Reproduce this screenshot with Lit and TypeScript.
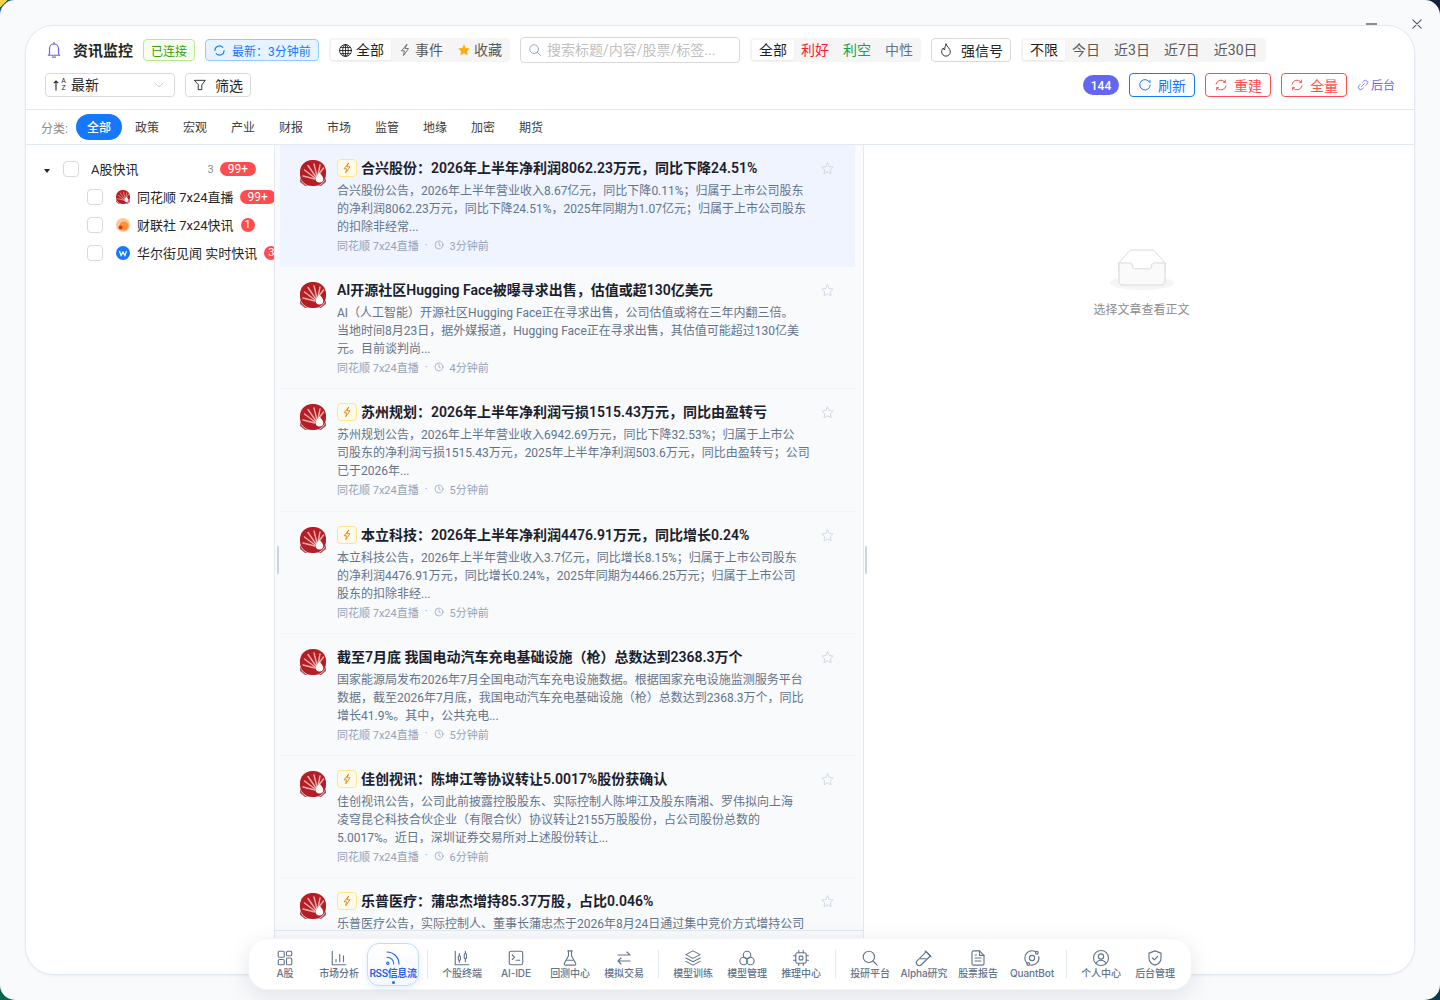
import { LitElement, html, css, svg } from "lit";
import { customElement } from "lit/decorators.js";

const ic = (body: any, size = 16, sw = 1.6) => html`<svg class="ic" width=${size} height=${size} viewBox="0 0 24 24" fill="none" stroke="currentColor" stroke-width=${sw} stroke-linecap="round" stroke-linejoin="round">${body}</svg>`;

const I: Record<string, any> = {
  bell: svg`<path d="M6 17V10a6 6 0 0 1 12 0v7l1.600 2H4.400z"/><path d="M10 21.500h4"/><path d="M12 2v2"/>`,
  spin: svg`<path d="M20.500 12a8.500 8.500 0 0 1-14.600 5.900"/><path d="M3.500 12A8.500 8.500 0 0 1 18.100 6.100"/>`,
  globe: svg`<circle cx="12" cy="12" r="9.500"/><ellipse cx="12" cy="12" rx="4.500" ry="9.500"/><path d="M2.500 12h19M4 7h16M4 17h16M12 2.500v19"/>`,
  bolt: svg`<path d="M15 2.500 6 13.500h5l-1.500 8 8.500-12h-5.500z"/>`,
  search: svg`<circle cx="10.500" cy="10.500" r="7.500"/><path d="m16 16 5.500 5.500"/>`,
  flame: svg`<path d="M12 2c1 4.500 7.500 7 7.500 13a7.500 7.500 0 0 1-15 0c0-3 1.500-5 3-6.500.3 1.800 1 3 2 3.500C10 8.500 10.500 5 12 2z"/>`,
  filter: svg`<path d="M3 4h18l-6 8v8H9v-8z"/>`,
  chev: svg`<path d="m4 8 8 8 8-8"/>`,
  refresh: svg`<path d="M20 7.500A9 9 0 1 0 21 12"/><path d="M20.500 4v3.500"/>`,
  rebuild: svg`<path d="M3.500 10.500A8.800 8.800 0 0 1 19 7"/><path d="M20.500 13.500A8.800 8.800 0 0 1 5 17"/><path d="M19.500 3.500V7.500h-3M4.500 20.500V16.500h3"/>`,
  link: svg`<path d="M9 15 15 9"/><path d="m11 6.500 2.500-2.500a4.500 4.500 0 0 1 6.500 6.500L17.500 13"/><path d="M13 17.500 10.500 20A4.500 4.500 0 0 1 4 13.500L6.500 11"/>`,
  star: svg`<path d="m12 3 2.800 5.800 6.200.9-4.500 4.400 1.100 6.300L12 17.400l-5.600 3 1.100-6.300L3 9.700l6.200-.9z"/>`,
  clock: svg`<circle cx="12" cy="12" r="9.500"/><path d="M12 6.500V12l3.500 2"/>`,
  close: svg`<path d="M5 5l14 14M19 5 5 19"/>`,
  grid: svg`<rect x="3" y="3" width="8" height="8" rx="1.500"/><rect x="14" y="3" width="7" height="6" rx="1.500"/><rect x="3" y="14" width="8" height="7" rx="1.500"/><rect x="14" y="12" width="7" height="9" rx="1.500"/>`,
  chart: svg`<path d="M3 3v18h18"/><path d="M8 17v-3M13 17V7M18 17v-8"/>`,
  rss: svg`<path d="M4 11a9 9 0 0 1 9 9"/><path d="M4 4a16 16 0 0 1 16 16"/><circle cx="5" cy="19" r="1.500"/>`,
  candle: svg`<path d="M3 3v18h18"/><rect x="7" y="9" width="3" height="6" rx="1.500"/><rect x="15" y="6" width="3" height="7" rx="1.500"/><path d="M8.500 6v3M8.500 15v3M16.500 3v3M16.500 13v4"/>`,
  term: svg`<rect x="3" y="3" width="18" height="18" rx="2.500"/><path d="m7 8 3 3-3 3M12 15h5"/>`,
  flask: svg`<path d="M9 2.500h6M10 2.500V9l-5.500 10a1.700 1.700 0 0 0 1.500 2.500h12a1.700 1.700 0 0 0 1.500-2.500L14 9V2.500"/><path d="M7.500 15h9"/>`,
  swap: svg`<path d="M4 8h16M16 4l4 4M20 16H4M8 12l-4 4 4 4"/>`,
  layers: svg`<path d="m12 2.500 9.500 5-9.500 5-9.500-5z"/><path d="m2.500 12 9.500 5 9.500-5"/><path d="m2.500 16.500 9.500 5 9.500-5"/>`,
  rings: svg`<circle cx="12" cy="8" r="5"/><circle cx="7.500" cy="16" r="5"/><circle cx="16.500" cy="16" r="5"/>`,
  chip: svg`<rect x="5" y="5" width="14" height="14" rx="2.500"/><rect x="9.500" y="9.500" width="5" height="5" rx="1"/><path d="M9 2v3M15 2v3M9 19v3M15 19v3M2 9h3M2 15h3M19 9h3M19 15h3"/>`,
  pen: svg`<path d="M15 3.500 20.500 9 8.500 21a3.800 3.800 0 0 1-5.500-5.500z"/><path d="M13.500 2.500l8 8M7 13h8"/>`,
  doc: svg`<path d="M14 2.500H6a2 2 0 0 0-2 2v15a2 2 0 0 0 2 2h12a2 2 0 0 0 2-2V8.500z"/><path d="M14 2.500v6h6M8 12h8M8 16h8M8 8h2"/>`,
  orbit: svg`<circle cx="12" cy="12" r="3.500"/><path d="M17 3.800A9.500 9.500 0 0 0 5 5.500 9.500 9.500 0 0 0 5.500 19"/><path d="M21 10a9.500 9.500 0 0 1-11 11.300"/><circle cx="18.500" cy="5" r="1.800"/><circle cx="7" cy="20" r="1.800"/>`,
  user: svg`<circle cx="12" cy="12" r="10"/><circle cx="12" cy="10" r="3.500"/><path d="M5.500 19.500c1-3 3.500-4.500 6.500-4.500s5.500 1.500 6.500 4.500"/>`,
  shield: svg`<path d="M12 2.500 20 5.500v6.500c0 4.500-3.500 8-8 9.500-4.500-1.500-8-5-8-9.500V5.500z"/><path d="m8.500 12 2.500 2.500 4.500-4.500"/>`,
};

const ths = (s: number) => html`<svg width=${s} height=${s} viewBox="0 0 26 26"><rect width="26" height="26" rx="12" fill="#b51e26"/><path d="M0 18a14 14 0 0 0 26 0v4l-5 4H5l-5-4z" fill="#7d1219" opacity=".7"/><g stroke="#eeb0aa" stroke-width="1.400" fill="none" stroke-linecap="round"><path d="M15 19 3 16"/><path d="M15 18 4.500 10"/><path d="M16 17 8 5.500"/><path d="M17 16 14 4"/><path d="M18 15l2-10"/><path d="M19 14 23.500 8"/></g><path d="M19.500 12.500c2.200 2.800 3.800 4.400 3.800 6.300a3.800 3.800 0 0 1-7.600 0c0-1.900 1.600-3.500 3.800-6.300z" fill="#fff"/></svg>`;

const ITEMS = [
  { tag: 1, title: "合兴股份：2026年上半年净利润8062.23万元，同比下降24.51%", body: "合兴股份公告，2026年上半年营业收入8.67亿元，同比下降0.11%；归属于上市公司股东\n的净利润8062.23万元，同比下降24.51%，2025年同期为1.07亿元；归属于上市公司股东\n的扣除非经常...", time: "3分钟前" },
  { tag: 0, title: "AI开源社区Hugging Face被曝寻求出售，估值或超130亿美元", body: "AI（人工智能）开源社区Hugging Face正在寻求出售，公司估值或将在三年内翻三倍。\n当地时间8月23日，据外媒报道，Hugging Face正在寻求出售，其估值可能超过130亿美\n元。目前谈判尚...", time: "4分钟前" },
  { tag: 1, title: "苏州规划：2026年上半年净利润亏损1515.43万元，同比由盈转亏", body: "苏州规划公告，2026年上半年营业收入6942.69万元，同比下降32.53%；归属于上市公\n司股东的净利润亏损1515.43万元，2025年上半年净利润503.6万元，同比由盈转亏；公司\n已于2026年...", time: "5分钟前" },
  { tag: 1, title: "本立科技：2026年上半年净利润4476.91万元，同比增长0.24%", body: "本立科技公告，2026年上半年营业收入3.7亿元，同比增长8.15%；归属于上市公司股东\n的净利润4476.91万元，同比增长0.24%，2025年同期为4466.25万元；归属于上市公司\n股东的扣除非经...", time: "5分钟前" },
  { tag: 0, title: "截至7月底 我国电动汽车充电基础设施（枪）总数达到2368.3万个", body: "国家能源局发布2026年7月全国电动汽车充电设施数据。根据国家充电设施监测服务平台\n数据，截至2026年7月底，我国电动汽车充电基础设施（枪）总数达到2368.3万个，同比\n增长41.9%。其中，公共充电...", time: "5分钟前" },
  { tag: 1, title: "佳创视讯：陈坤江等协议转让5.0017%股份获确认", body: "佳创视讯公告，公司此前披露控股股东、实际控制人陈坤江及股东隋湘、罗伟拟向上海\n凌穹昆仑科技合伙企业（有限合伙）协议转让2155万股股份，占公司股份总数的\n5.0017%。近日，深圳证券交易所对上述股份转让...", time: "6分钟前" },
  { tag: 1, title: "乐普医疗：蒲忠杰增持85.37万股，占比0.046%", body: "乐普医疗公告，实际控制人、董事长蒲忠杰于2026年8月24日通过集中竞价方式增持公司\n股份85.37万股，占公司总股本的0.046%，本次增持后合计持股...", time: "6分钟前" },
];

const DOCK: any[][] = [
  [["grid", "A股"], ["chart", "市场分析"], ["rss", "RSS信息流", 1]],
  [["candle", "个股终端"], ["term", "AI-IDE"], ["flask", "回测中心"], ["swap", "模拟交易"]],
  [["layers", "模型训练"], ["rings", "模型管理"], ["chip", "推理中心"]],
  [["search", "投研平台"], ["pen", "Alpha研究"], ["doc", "股票报告"], ["orbit", "QuantBot"]],
  [["user", "个人中心"], ["shield", "后台管理"]],
];

@customElement("app-root")
export class AppRoot extends LitElement {
  static styles = css`
    :host { display: block; width: 1440px; height: 1000px; position: relative; overflow: hidden;
      font-family: Roboto, "Noto Sans CJK SC", "Noto Sans", sans-serif; color: #262626;
      background:
        linear-gradient(135deg, #f2d24a 0 12%, #1b5f86 12% 50%, transparent 50%) 0 0 / 30px 30px no-repeat,
        linear-gradient(225deg, #13233f 0 50%, transparent 50%) 100% 0 / 30px 30px no-repeat,
        linear-gradient(45deg, #07634f 0 50%, transparent 50%) 0 100% / 30px 30px no-repeat,
        linear-gradient(315deg, #0d3a48 0 50%, transparent 50%) 100% 100% / 30px 30px no-repeat,
        #f8fafc; }
    * { box-sizing: border-box; }
    .ic { display: block; flex: none; }
    .up { margin-bottom: 2px; }
    .win { height: 1000px; padding: 25px; border-radius: 15px; background: #f8fafc; }
    .panel { height: 950px; border: 1px solid #e2e8f0; border-radius: 28px; background: #fff; overflow: hidden; display: flex; flex-direction: column; box-shadow: 0 1px 3px rgba(15,23,42,.05); }
    .hdr { height: 84px; flex: none; padding: 12px 19px 0; border-bottom: 1px solid #e2e8f0; display: flex; flex-direction: column; gap: 11px; }
    .row { display: flex; align-items: center; height: 24px; gap: 10px; }
    .bell { color: #6366f1; width: 18px; }
    .title { font-size: 15px; font-weight: 600; white-space: nowrap; color: #262626; }
    .badge { height: 22px; display: flex; align-items: center; gap: 6px; padding: 0 7px; border: 1px solid; border-radius: 4px; font-size: 12px; white-space: nowrap; }
    .ok { color: #389e0d; background: #f6ffed; border-color: #b7eb8f; }
    .new { color: #1677ff; background: #e6f4ff; border-color: #91caff; width: 114px; }
    .seg { display: flex; height: 24px; background: #f5f5f5; border-radius: 4px; padding: 2px; font-size: 14px; color: #595959; white-space: nowrap; }
    .seg span { display: flex; align-items: center; gap: 3px; padding: 0 7px; line-height: 20px; border-radius: 2px; }
    .seg span:last-child { padding-right: 6px; }
    .seg span.on { background: #fff; color: #1f1f1f; box-shadow: 0 1px 2px rgba(0,0,0,.05); }
    .pos { color: #f5222d; } .neg { color: #16a34a; } .neu { color: #64748b; }
    .search { width: 220px; height: 26px; border: 1px solid #d9d9d9; border-radius: 4px; display: flex; align-items: center; gap: 5px; padding: 0 7px; font-size: 14px; color: #bfbfbf; white-space: nowrap; }
    .search .ic { color: #8fa1bb; }
    .btn { height: 24px; display: flex; align-items: center; gap: 8px; border: 1px solid #d9d9d9; border-radius: 4px; padding: 0 7px; font-size: 14px; color: #262626; background: #fff; white-space: nowrap; }
    .sel { width: 130px; gap: 4px; justify-content: flex-start; }
    .sel .chev { margin-left: auto; margin-right: 2px; color: #bfbfbf; }
    .az { font-size: 7px; line-height: 7px; text-align: center; width: 7px; }
    .sortic { display: flex; align-items: center; gap: 1px; width: 14px; }
    .spacer { flex: 1; }
    .count { height: 20px; width: 36px; border-radius: 10px; background: #6366f1; color: #fff; font-size: 12px; font-weight: 500; display: flex; align-items: center; justify-content: center; padding-top: 2px; }
    .blue { color: #1677ff; border-color: #1677ff; }
    .red { color: #ff4d4f; border-color: #ff4d4f; }
    .btn.wide { padding: 0 8px; gap: 6px; }
    .link { display: flex; align-items: center; gap: 2px; font-size: 12px; color: #6366f1; white-space: nowrap; }
    .cats { height: 35px; flex: none; border-bottom: 1px solid #e2e8f0; display: flex; align-items: center; gap: 2px; padding-left: 15px; font-size: 12px; color: #404040; white-space: nowrap; }
    .cats .lab { color: #8c8c8c; margin-right: 6px; }
    .cats span.c { padding: 0 11px; height: 26px; line-height: 28px; border-radius: 13px; }
    .cats span.on { background: #1677ff; color: #fff; font-weight: 500; }
    .main { flex: 1; min-height: 0; display: flex; }
    .tree { width: 249px; flex: none; border-right: 1px solid #e2e8f0; padding-top: 10px; overflow: hidden; font-size: 13px; color: #262626; }
    .node { height: 28px; display: flex; align-items: center; white-space: nowrap; }
    .node.root { padding-left: 18px; }
    .node.kid { padding-left: 61px; }
    .caret { width: 0; height: 0; border: 3.500px solid transparent; border-top: 4px solid #262626; border-bottom: 0; margin-right: 13px; margin-top: 3px; }
    .cb { width: 16px; height: 16px; border: 1px solid #d9d9d9; border-radius: 4px; background: #fff; flex: none; }
    .root .cb { margin-right: 12px; }
    .kid .cb { margin-right: 13px; }
    .srcic { width: 14px; height: 14px; margin-right: 7px; flex: none; display: block; }
    .n { font-size: 11px; color: #8c8c8c; margin-left: auto; margin-right: 6px; }
    .root { padding-right: 18px; }
    .pill { background: #ff4d4f; color: #fff; font-size: 12px; line-height: 14px; height: 14px; border-radius: 7px; padding: 0 8px; margin-left: 6px; flex: none; }
    .root .pill { margin-left: 0; }
    .pill.one { padding: 0; width: 14px; text-align: center; font-size: 11px; margin-left: 7px; }
    .list { width: 589px; flex: none; background: #f8fafc; border-right: 1px solid #e2e8f0; overflow: hidden; display: flex; flex-direction: column; }
    .scroll { height: 786px; flex: none; overflow: hidden; padding-left: 5px; padding-right: 8px; border-bottom: 1px solid #e2e8f0; }
    .item { height: 122.200px; padding: 11px 20px 0; display: flex; gap: 11px; border-bottom: 1px solid #f1f5f9; position: relative; }
    .item.on { background: #eff4ff; border-bottom-color: transparent; }
    .ava { flex: none; margin-top: 4px; }
    .bodyc { width: 482px; }
    .tline { display: flex; align-items: center; gap: 4px; height: 22px; font-size: 14px; font-weight: 600; color: #1a202c; white-space: nowrap; }
    .tag { width: 20px; height: 18px; margin-top: 2px; border: 1px solid #fde68a; background: #fffbeb; border-radius: 4px; display: flex; align-items: center; justify-content: center; color: #d97706; flex: none; }
    .txt { margin: 4px 0 0; font-size: 12px; line-height: 18px; height: 54px; color: #64748b; overflow: hidden; white-space: pre; }
    .meta { display: flex; align-items: center; gap: 6px; height: 18px; font-size: 11px; color: #94a3b8; white-space: nowrap; }
    .starb { position: absolute; left: 540px; top: 16px; color: #cbd5e1; }
    .grip { position: absolute; top: 546px; width: 2px; height: 28px; background: #cbd5e1; border-radius: 1px; }
    .detail { flex: 1; display: flex; flex-direction: column; align-items: center; padding: 104px 0 0 5px; font-size: 12px; color: #8c8c8c; }
    .detail p { margin: 11px 0 0; line-height: 18px; }
    .ctl-min { position: absolute; left: 1366px; top: 23px; width: 11px; height: 2px; background: #8c8c8c; }
    .ctl-x { position: absolute; left: 1410px; top: 17px; color: #4b5563; }
    .dock { position: absolute; left: 248px; top: 938px; width: 944px; height: 52px; border-radius: 20px; background: rgba(255,255,255,.97); box-shadow: 0 6px 24px rgba(15,23,42,.1); border: 1px solid #f1f5f9; display: flex; align-items: center; padding: 0 10px; gap: 2px; }
    .di { width: 52px; height: 43px; flex: none; display: flex; flex-direction: column; align-items: center; padding-top: 5px; color: #64748b; border-radius: 12px; border: 1px solid transparent; position: relative; }
    .di span { font-size: 10px; line-height: 13px; font-weight: 500; white-space: nowrap; font-family: Inter, "Noto Sans CJK SC", sans-serif; letter-spacing: -.1px; }
    .di.on { color: #2563eb; border-color: #bfdbfe; background: linear-gradient(#fff, #f5f8ff); box-shadow: 0 2px 6px rgba(37,99,235,.12); }
    .di.on span { font-weight: 600; letter-spacing: -.4px; }
    .di.on i { position: absolute; left: 23.500px; bottom: 1px; width: 3px; height: 3px; border-radius: 50%; background: #2563eb; }
    .dsep { width: 1px; height: 28px; margin: 0 6px; background: #e2e8f0; flex: none; }
  `;

  seg(items: any[]) {
    return html`<div class="seg">${items.map((i) => html`<span class="${i.on ? "on" : ""} ${i.c || ""}">${i.ic || ""}${i.t}</span>`)}</div>`;
  }

  render() {
    return html`
      <div class="win"><div class="panel">
        <div class="hdr">
          <div class="row">
            <span class="bell">${ic(I.bell, 18, 1.6)}</span>
            <span class="title up">资讯监控</span>
            <span class="badge ok">已连接</span>
            <span class="badge new">${ic(I.spin, 13, 2)}最新：3分钟前</span>
            ${this.seg([
              { t: "全部", on: 1, ic: ic(I.globe, 15, 1.4) },
              { t: "事件", ic: ic(I.bolt, 14, 1.4) },
              { t: "收藏", ic: html`<svg class="ic" width="14" height="14" viewBox="0 0 24 24" fill="#faad14"><path d="m12 2 3 6.500 7 .9-5 4.800 1.300 7L12 17.800l-6.300 3.400 1.300-7-5-4.800 7-.9z"/></svg>` },
            ])}
            <div class="search">${ic(I.search, 14, 1.6)}<span class="up">搜索标题/内容/股票/标签...</span></div>
            ${this.seg([{ t: "全部", on: 1 }, { t: "利好", c: "pos" }, { t: "利空", c: "neg" }, { t: "中性", c: "neu" }])}
            <div class="btn">${ic(I.flame, 14, 1.6)}<span>强信号</span></div>
            ${this.seg([{ t: "不限", on: 1 }, { t: "今日" }, { t: "近3日" }, { t: "近7日" }, { t: "近30日" }])}
          </div>
          <div class="row">
            <div class="btn sel">
              <span class="sortic"><svg class="ic" width="6" height="11" viewBox="0 0 6 11" fill="none" stroke="currentColor" stroke-width="1.100"><path d="M3 10.500V1M.8 3.200 3 1l2.200 2.200"/></svg><span class="az">A<br />Z</span></span>
              <span class="up">最新</span>
              <span class="chev">${ic(I.chev, 12, 1.4)}</span>
            </div>
            <div class="btn">${ic(I.filter, 14, 1.6)}<span>筛选</span></div>
            <span class="spacer"></span>
            <span class="count">144</span>
            <div class="btn wide blue">${ic(I.refresh, 14, 1.7)}<span>刷新</span></div>
            <div class="btn wide red">${ic(I.rebuild, 14, 1.7)}<span>重建</span></div>
            <div class="btn wide red">${ic(I.rebuild, 14, 1.7)}<span>全量</span></div>
            <span class="link">${ic(I.link, 12, 1.6)}<span class="up">后台</span></span>
          </div>
        </div>
        <div class="cats">
          <span class="lab">分类:</span>
          ${["全部", "政策", "宏观", "产业", "财报", "市场", "监管", "地缘", "加密", "期货"].map((c, i) => html`<span class="c ${i === 0 ? "on" : ""}">${c}</span>`)}
        </div>
        <div class="main">
          <div class="tree">
            <div class="node root"><span class="caret"></span><span class="cb"></span><span class="up">A股快讯</span><span class="n">3</span><span class="pill">99+</span></div>
            <div class="node kid"><span class="cb"></span><span class="srcic">${ths(14)}</span><span class="up">同花顺 7x24直播</span><span class="pill">99+</span></div>
            <div class="node kid"><span class="cb"></span><svg class="srcic" viewBox="0 0 14 14"><circle cx="7" cy="7" r="7" fill="#fdc79a"/><circle cx="8" cy="8" r="4.500" fill="#fb923c"/><circle cx="4.500" cy="9.500" r="2" fill="#ef2b10"/></svg><span class="up">财联社 7x24快讯</span><span class="pill one">1</span></div>
            <div class="node kid"><span class="cb"></span><svg class="srcic" viewBox="0 0 14 14"><circle cx="7" cy="7" r="7" fill="#1677ff"/><path d="m3.500 5 1.600 4.500L7 6l1.900 3.500L10.500 5" fill="none" stroke="#fff" stroke-width="1.300"/></svg><span class="up">华尔街见闻 实时快讯</span><span class="pill one">3</span></div>
          </div>
          <div class="list">
            <div class="scroll">
              ${ITEMS.map((it, idx) => html`
                <div class="item ${idx === 0 ? "on" : ""}">
                  <span class="ava">${ths(26)}</span>
                  <div class="bodyc">
                    <div class="tline">${it.tag ? html`<span class="tag">${ic(I.bolt, 12, 1.6)}</span>` : ""}<span>${it.title}</span></div>
                    <p class="txt">${it.body}</p>
                    <div class="meta"><span>同花顺 7x24直播</span><span>·</span>${ic(I.clock, 10, 1.8)}<span>${it.time}</span></div>
                  </div>
                  <span class="starb">${ic(I.star, 15, 1.4)}</span>
                </div>`)}
            </div>
          </div>
          <div class="detail">
            <svg width="64" height="41" viewBox="0 0 64 41"><g transform="translate(0 1)" fill="none" fill-rule="evenodd"><ellipse fill="#f5f5f5" cx="32" cy="33" rx="32" ry="7"/><g fill-rule="nonzero" stroke="#d9d9d9"><path d="M55 12.760 44.854 1.258C44.367.474 43.656 0 42.907 0H21.093c-.749 0-1.460.474-1.947 1.257L9 12.761V22h46v-9.240z"/><path d="M41.613 15.931c0-1.605.994-2.930 2.227-2.931H55v18.137C55 33.260 53.680 35 52.050 35h-40.100C10.320 35 9 33.259 9 31.137V13h11.160c1.233 0 2.227 1.323 2.227 2.928v.022c0 1.605 1.005 2.901 2.237 2.901h14.752c1.232 0 2.237-1.308 2.237-2.913v-.007z" fill="#fafafa"/></g></g></svg>
            <p>选择文章查看正文</p>
          </div>
        </div>
      </div></div>
      <span class="grip" style="left:277px"></span>
      <span class="grip" style="left:865px"></span>
      <span class="ctl-min"></span>
      <span class="ctl-x">${ic(I.close, 14, 1.8)}</span>
      <nav class="dock">
        ${DOCK.map((g, gi) => html`
          ${gi ? html`<span class="dsep"></span>` : ""}
          ${g.map((d) => html`<div class="di ${d[2] ? "on" : ""}">${ic(I[d[0]], 18, 1.5)}<span>${d[1]}</span>${d[2] ? html`<i></i>` : ""}</div>`)}
        `)}
      </nav>`;
  }
}
